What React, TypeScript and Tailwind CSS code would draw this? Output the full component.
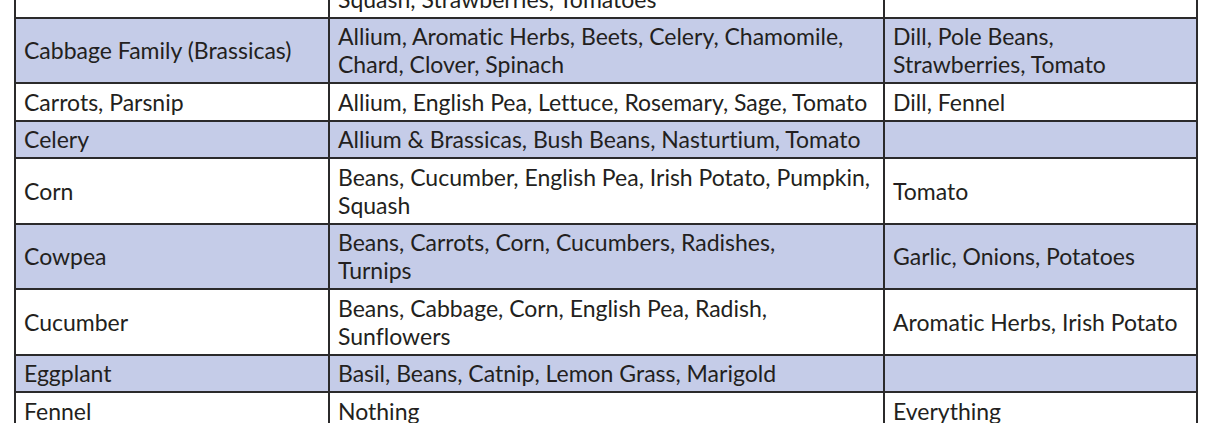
import React from 'react';

type Row = { plant: string; good: string[]; bad: string[]; shaded: boolean };

const rows: Row[] = [
  { plant: 'Borage', good: ['Beans, Cucumbers, Grapes, Pumpkin,', 'Squash, Strawberries, Tomatoes'], bad: [], shaded: false },
  { plant: 'Cabbage Family (Brassicas)', good: ['Allium, Aromatic Herbs, Beets, Celery, Chamomile,', 'Chard, Clover, Spinach'], bad: ['Dill, Pole Beans,', 'Strawberries, Tomato'], shaded: true },
  { plant: 'Carrots, Parsnip', good: ['Allium, English Pea, Lettuce, Rosemary, Sage, Tomato'], bad: ['Dill, Fennel'], shaded: false },
  { plant: 'Celery', good: ['Allium & Brassicas, Bush Beans, Nasturtium, Tomato'], bad: [], shaded: true },
  { plant: 'Corn', good: ['Beans, Cucumber, English Pea, Irish Potato, Pumpkin,', 'Squash'], bad: ['Tomato'], shaded: false },
  { plant: 'Cowpea', good: ['Beans, Carrots, Corn, Cucumbers, Radishes,', 'Turnips'], bad: ['Garlic, Onions, Potatoes'], shaded: true },
  { plant: 'Cucumber', good: ['Beans, Cabbage, Corn, English Pea, Radish,', 'Sunflowers'], bad: ['Aromatic Herbs, Irish Potato'], shaded: false },
  { plant: 'Eggplant', good: ['Basil, Beans, Catnip, Lemon Grass, Marigold'], bad: [], shaded: true },
  { plant: 'Fennel', good: ['Nothing'], bad: ['Everything'], shaded: false },
];

const Lines = ({ items }: { items: string[] }) => (
  <>
    {items.map((t, i) => (
      <div key={i} className="whitespace-nowrap">{t}</div>
    ))}
  </>
);

const App: React.FC = () => {
  return (
    <div className="w-[1210px] h-[423px] overflow-hidden bg-white">
      <table
        className="ml-[14px] mt-[-49px] w-[1182px] table-fixed border-collapse text-[#231f20] text-[23px] leading-[28px] [font-variant-ligatures:none]"
        style={{ fontFamily: 'Lato, "Open Sans", sans-serif' }}
      >
        <colgroup>
          <col className="w-[314px]" />
          <col className="w-[555px]" />
          <col className="w-[313px]" />
        </colgroup>
        <tbody>
          {rows.map((r) => (
            <tr key={r.plant} className={r.shaded ? 'bg-[#c5cce8]' : 'bg-white'}>
              <td className="border-2 border-[#2b2a2b] px-[8px] py-[3.75px] align-middle whitespace-nowrap">{r.plant}</td>
              <td className="border-2 border-[#2b2a2b] px-[8px] py-[3.75px] align-middle">
                <Lines items={r.good} />
              </td>
              <td className="border-2 border-[#2b2a2b] px-[8px] py-[3.75px] align-middle">
                <Lines items={r.bad} />
              </td>
            </tr>
          ))}
        </tbody>
      </table>
    </div>
  );
};

export default App;
